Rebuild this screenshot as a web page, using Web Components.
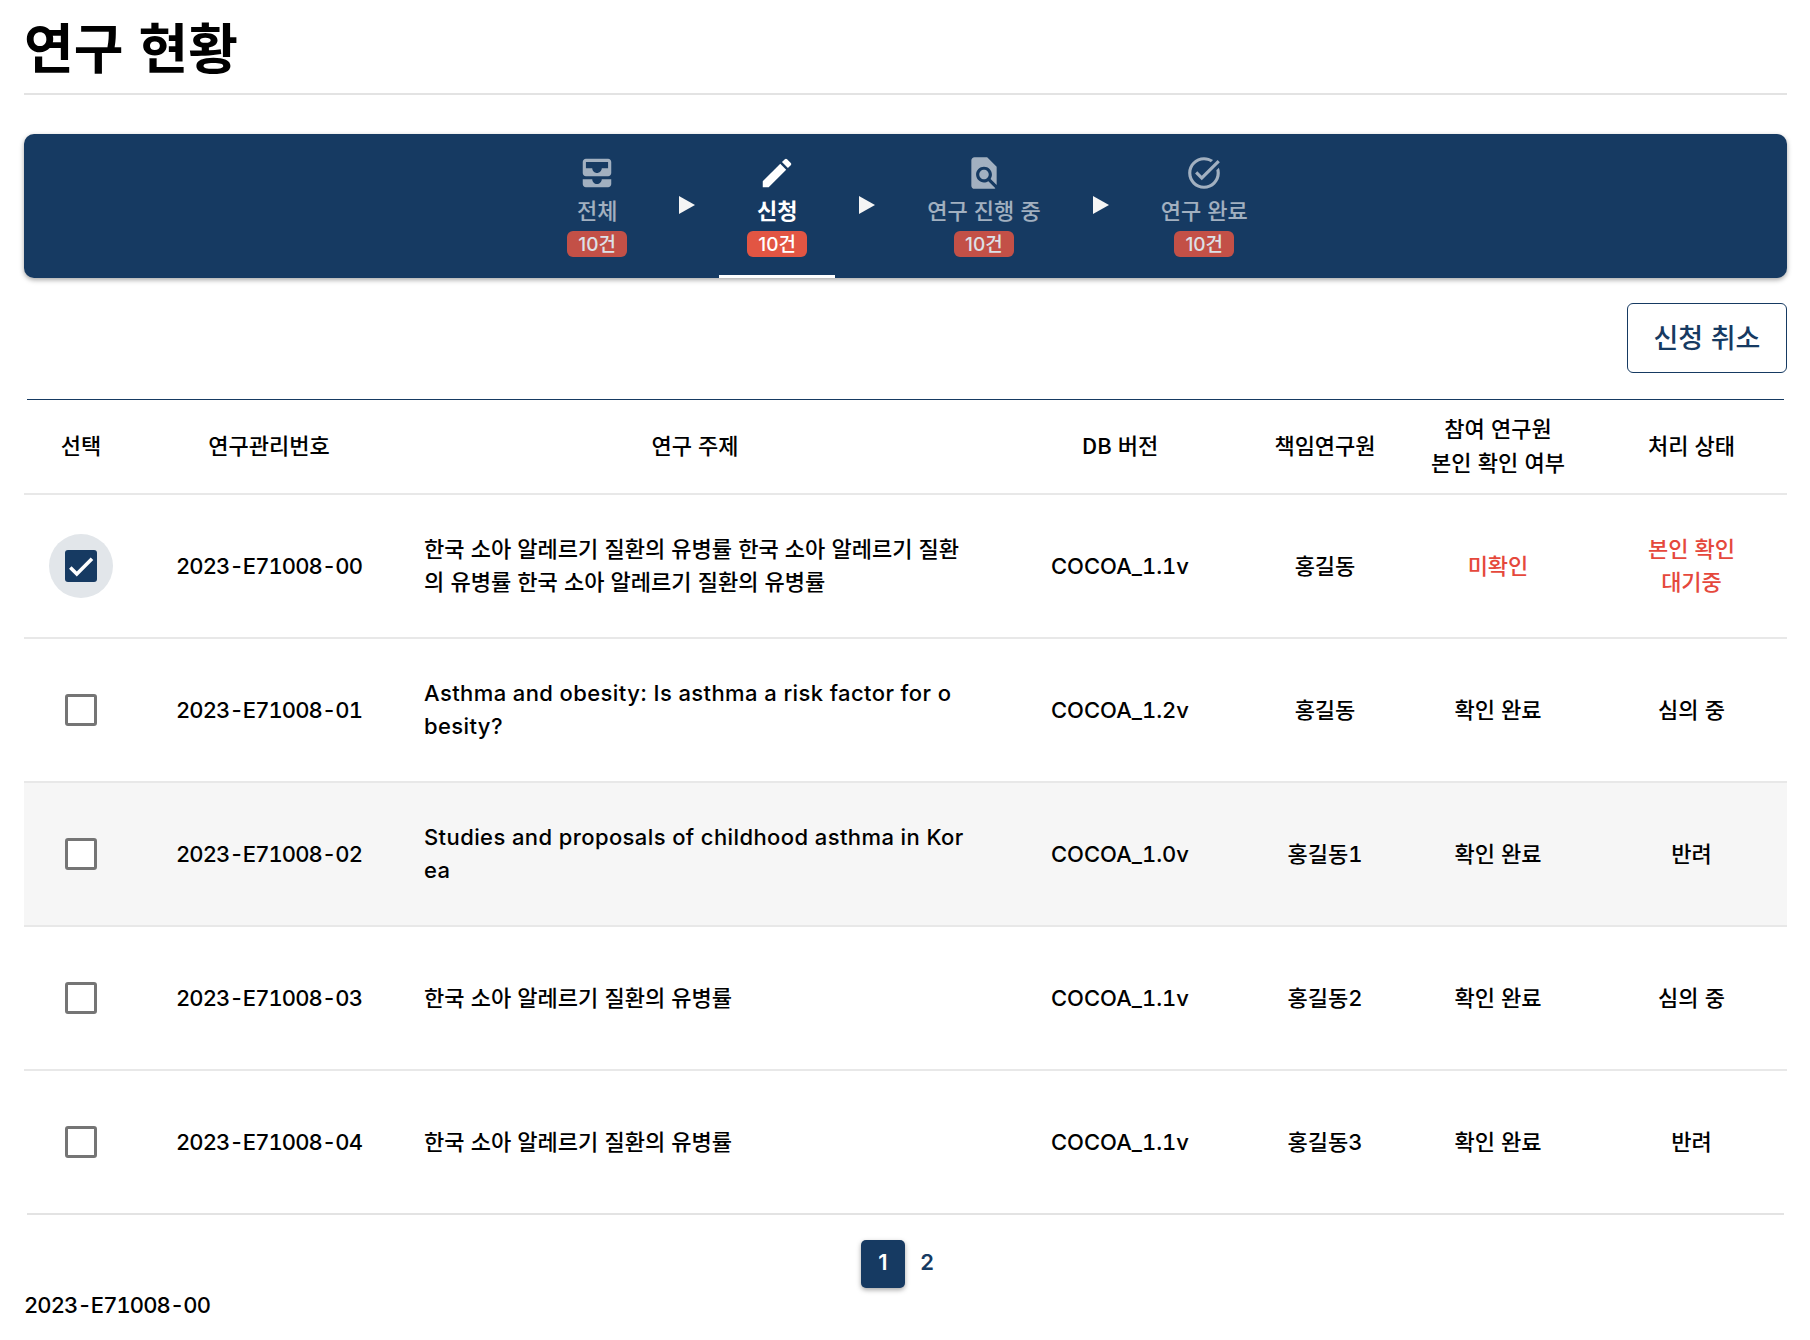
<!DOCTYPE html>
<html lang="ko">
<head>
<meta charset="utf-8">
<title>연구 현황</title>
<style>
  html, body { margin: 0; padding: 0; background: #fff; }
  body { font-family: "Noto Sans CJK KR", "Noto Sans", sans-serif; color: #000; }
</style>
</head>
<body>
<study-page>
  <page-title>연구 현황</page-title>
  <status-nav>
    <nav-step icon="inbox" count="10건">전체</nav-step>
    <nav-arrow></nav-arrow>
    <nav-step icon="edit" count="10건" active>신청</nav-step>
    <nav-arrow></nav-arrow>
    <nav-step icon="find" count="10건">연구 진행 중</nav-step>
    <nav-arrow></nav-arrow>
    <nav-step icon="done" count="10건">연구 완료</nav-step>
  </status-nav>
  <table-toolbar>신청 취소</table-toolbar>
  <study-table>
    <study-row checked code="2023-E71008-00" db="COCOA_1.1v" owner="홍길동" confirm="미확인" status="본인 확인&#10;대기중" alert>한국 소아 알레르기 질환의 유병률 한국 소아 알레르기 질환의 유병률 한국 소아 알레르기 질환의 유병률</study-row>
    <study-row latin code="2023-E71008-01" db="COCOA_1.2v" owner="홍길동" confirm="확인 완료" status="심의 중">Asthma and obesity: Is asthma a risk factor for obesity?</study-row>
    <study-row latin shaded code="2023-E71008-02" db="COCOA_1.0v" owner="홍길동1" confirm="확인 완료" status="반려">Studies and proposals of childhood asthma in Korea</study-row>
    <study-row code="2023-E71008-03" db="COCOA_1.1v" owner="홍길동2" confirm="확인 완료" status="심의 중">한국 소아 알레르기 질환의 유병률</study-row>
    <study-row last code="2023-E71008-04" db="COCOA_1.1v" owner="홍길동3" confirm="확인 완료" status="반려">한국 소아 알레르기 질환의 유병률</study-row>
  </study-table>
  <page-pager current="1" total="2"></page-pager>
  <selected-code>2023-E71008-00</selected-code>
</study-page>

<script>
const ICONS = {
  inbox: 'M19 3H5c-1.1 0-2 .9-2 2v7c0 1.1.9 2 2 2h14c1.1 0 2-.9 2-2V5c0-1.1-.9-2-2-2zm0 6h-4c0 1.62-1.38 3-3 3s-3-1.38-3-3H5V5h14v4zm-4 7h6v3c0 1.1-.9 2-2 2H5c-1.1 0-2-.9-2-2v-3h6c0 1.66 1.34 3 3 3s3-1.34 3-3z',
  edit: 'M3 17.25V21h3.75L17.81 9.94l-3.75-3.75L3 17.25zM20.71 7.04c.39-.39.39-1.02 0-1.41l-2.34-2.34a.9959.9959 0 0 0-1.41 0l-1.83 1.83 3.75 3.75 1.83-1.83z',
  find: 'M20 19.59V8l-6-6H6c-1.1 0-1.99.9-1.99 2L4 20c0 1.1.89 2 1.99 2H18c.45 0 .85-.15 1.19-.4l-4.43-4.43c-.8.52-1.74.83-2.76.83-2.76 0-5-2.24-5-5s2.24-5 5-5 5 2.24 5 5c0 1.02-.31 1.96-.83 2.75L20 19.59zM9 13c0 1.66 1.34 3 3 3s3-1.34 3-3-1.34-3-3-3-3 1.34-3 3z',
  done: 'M22 5.18 10.59 16.6l-4.24-4.24 1.41-1.41 2.83 2.83 10-10L22 5.18zm-2.21 5.04c.13.57.21 1.17.21 1.78 0 4.42-3.58 8-8 8s-8-3.58-8-8 3.58-8 8-8c1.58 0 3.04.46 4.28 1.21l1.44-1.44C16.1 2.67 14.13 2 12 2 6.48 2 2 6.48 2 12s4.48 10 10 10 10-4.48 10-10c0-1.19-.22-2.33-.6-3.39l-1.61 1.61z'
}

const COLUMNS = '114px 262px 590px 260px 150px 196px 191px'
const LATIN = '"Inter", "Noto Sans CJK KR", sans-serif'

class Base extends HTMLElement {
  constructor() {
    super()
    this.shadow = this.attachShadow({mode: 'open'})
  }
}

class StudyPage extends Base {
  connectedCallback() {
    this.shadow.innerHTML = `
      <style>
        :host { display: block; padding: 0 23px 0 24px; height: 1340px; box-sizing: border-box; }
      </style>
      <slot></slot>`
  }
}

class PageTitle extends Base {
  connectedCallback() {
    this.shadow.innerHTML = `
      <style>
        :host {
          display: block;
          height: 93px;
          border-bottom: 2px solid #e3e3e3;
          font-size: 54px;
          font-weight: 700;
          line-height: 91px;
        }
      </style>
      <slot></slot>`
  }
}

class StatusNav extends Base {
  connectedCallback() {
    this.shadow.innerHTML = `
      <style>
        :host {
          display: flex;
          justify-content: center;
          height: 144px;
          margin-top: 39px;
          padding-left: 4px;
          background: #163a62;
          border-radius: 10px;
          box-shadow: 0 2px 5px rgba(0,0,0,.35);
        }
      </style>
      <slot></slot>`
  }
}

class NavStep extends Base {
  connectedCallback() {
    const active = this.hasAttribute('active')
    this.shadow.innerHTML = `
      <style>
        :host {
          display: flex;
          flex-direction: column;
          align-items: center;
          box-sizing: border-box;
          min-width: 116px;
          height: 144px;
          padding: 20px 28px 0;
          color: #fff;
          position: relative;
        }
        svg { width: 38px; height: 38px; fill: #fff; opacity: ${active ? 1 : .6}; display: block; }
        .label {
          font-size: 22px;
          font-weight: ${active ? 700 : 500};
          line-height: 32px;
          margin-top: 1px;
          white-space: nowrap;
          opacity: ${active ? 1 : .6};
        }
        .count {
          margin-top: 6px;
          height: 26px;
          padding: 0 11px;
          border-radius: 6px;
          background: #e25543;
          font: 500 19px/27px ${LATIN};
          white-space: nowrap;
          opacity: ${active ? 1 : .85};
        }
        .bar {
          display: ${active ? 'block' : 'none'};
          position: absolute;
          left: 0;
          right: 0;
          bottom: 0;
          height: 3px;
          background: #fff;
        }
      </style>
      <svg viewBox="0 0 24 24"><path d="${ICONS[this.getAttribute('icon')]}"/></svg>
      <div class="label"><slot></slot></div>
      <div class="count">${this.getAttribute('count')}</div>
      <div class="bar"></div>`
  }
}

class NavArrow extends Base {
  connectedCallback() {
    this.shadow.innerHTML = `
      <style>
        :host { display: flex; width: 64px; height: 144px; justify-content: center; padding-top: 62px; box-sizing: border-box; }
        i { display: block; width: 0; height: 0; border-left: 16px solid #f5f5f5; border-top: 9.5px solid transparent; border-bottom: 9.5px solid transparent; }
      </style>
      <i></i>`
  }
}

class TableToolbar extends Base {
  connectedCallback() {
    this.shadow.innerHTML = `
      <style>
        :host { display: flex; justify-content: flex-end; margin-top: 25px; }
        button {
          width: 160px;
          height: 70px;
          background: #fff;
          border: 1.5px solid #163a62;
          border-radius: 6px;
          color: #163a62;
          font: 500 27px "Noto Sans CJK KR", "Noto Sans", sans-serif;
          padding: 0 0 4px;
        }
      </style>
      <button><slot></slot></button>`
  }
}

class StudyTable extends Base {
  connectedCallback() {
    this.shadow.innerHTML = `
      <style>
        :host { display: block; margin-top: 26px; font-size: 22px; font-weight: 500; }
        .top { height: 1px; margin: 0 3px; background: #163a62; }
        .head {
          display: grid;
          grid-template-columns: ${COLUMNS};
          height: 95px;
          align-items: center;
          text-align: center;
          line-height: 33.5px;
          border-bottom: 2px solid #e8e8e8;
          box-sizing: border-box;
          padding-bottom: 4px;
        }
      </style>
      <div class="top"></div>
      <div class="head">
        <div>선택</div><div>연구관리번호</div><div>연구 주제</div><div>DB 버전</div>
        <div>책임연구원</div><div>참여 연구원<br>본인 확인 여부</div><div>처리 상태</div>
      </div>
      <slot></slot>`
  }
}

class StudyRow extends Base {
  connectedCallback() {
    const get = name => this.getAttribute(name)
    const alert = this.hasAttribute('alert')
    this.shadow.innerHTML = `
      <style>
        :host {
          display: grid;
          grid-template-columns: ${COLUMNS};
          height: 144px;
          align-items: center;
          text-align: center;
          line-height: 33px;
          box-sizing: border-box;
          position: relative;
          border-bottom: 2px solid #e8e8e8;
          background: ${this.hasAttribute('shaded') ? '#f6f6f6' : '#fff'};
        }
        :host([last]) { border-bottom-color: transparent; }
        :host([last])::after {
          content: "";
          position: absolute;
          left: 3px;
          right: 3px;
          bottom: -2px;
          height: 2px;
          background: #e3e3e3;
        }
        div { padding-bottom: 4px; }
        .subject { padding: 0 26px 4px 24px; text-align: left; word-break: break-all; }
        :host([latin]) .subject { font-family: ${LATIN}; letter-spacing: .4px; padding-bottom: 1px; }
        .latin { font-family: ${LATIN}; font-variant-numeric: tabular-nums; padding-bottom: 0; }
        .code { letter-spacing: -.9px; }
        .alert { color: #e5483c; }
        .status { white-space: pre-line; }
        row-check { justify-self: center; }
      </style>
      <row-check ${this.hasAttribute('checked') ? 'checked' : ''}></row-check>
      <div class="latin code">${get('code')}</div>
      <div class="subject"><slot></slot></div>
      <div class="latin">${get('db')}</div>
      <div class="latin">${get('owner')}</div>
      <div class="${alert ? 'alert' : ''}">${get('confirm')}</div>
      <div class="status ${alert ? 'alert' : ''}">${get('status')}</div>`
  }
}

class RowCheck extends Base {
  connectedCallback() {
    const checked = this.hasAttribute('checked')
    this.shadow.innerHTML = `
      <style>
        :host {
          display: flex;
          align-items: center;
          justify-content: center;
          width: 64px;
          height: 64px;
          border-radius: 50%;
          background: ${checked ? '#e2e6ea' : 'transparent'};
        }
        .box {
          box-sizing: border-box;
          width: 32px;
          height: 32px;
          border-radius: 3px;
          border: ${checked ? '0' : '3px solid #757575'};
          background: ${checked ? '#163a62' : '#fff'};
        }
        svg { display: block; width: 32px; height: 32px; }
      </style>
      <div class="box">${checked ? '<svg viewBox="0 0 32 32"><path d="M5.300 17.500l6.500 6.500L27 8.800" fill="none" stroke="#fff" stroke-width="3.600"/></svg>' : ''}</div>`
  }
}

class PagePager extends Base {
  connectedCallback() {
    const current = +this.getAttribute('current')
    const total = +this.getAttribute('total')
    let items = ''
    for (let i = 1; i <= total; i++) {
      items += `<a class="${i === current ? 'on' : ''}">${i}</a>`
    }
    this.shadow.innerHTML = `
      <style>
        :host { display: flex; justify-content: center; margin-top: 25px; padding-right: 1px; height: 48px; font: 600 22px ${LATIN}; color: #163a62; }
        a { display: block; width: 44px; line-height: 44px; text-align: center; border-radius: 5px; }
        .on { background: #163a62; color: #fff; box-shadow: 0 2px 5px rgba(0,0,0,.35); }
      </style>
      ${items}`
  }
}

class SelectedCode extends Base {
  connectedCallback() {
    this.shadow.innerHTML = `
      <style>
        :host { display: block; font: 500 22px/34px ${LATIN}; font-variant-numeric: tabular-nums; letter-spacing: -.9px; }
      </style>
      <slot></slot>`
  }
}

customElements.define('study-page', StudyPage)
customElements.define('page-title', PageTitle)
customElements.define('status-nav', StatusNav)
customElements.define('nav-step', NavStep)
customElements.define('nav-arrow', NavArrow)
customElements.define('table-toolbar', TableToolbar)
customElements.define('study-table', StudyTable)
customElements.define('study-row', StudyRow)
customElements.define('row-check', RowCheck)
customElements.define('page-pager', PagePager)
customElements.define('selected-code', SelectedCode)
</script>
</body>
</html>
